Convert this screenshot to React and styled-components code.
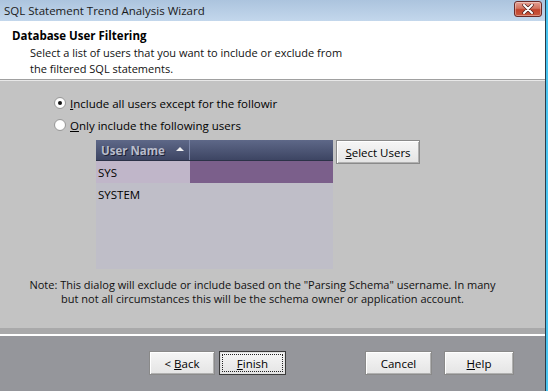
import styled, { createGlobalStyle } from 'styled-components';

const GlobalStyle = createGlobalStyle`
  html, body {
    margin: 0;
    padding: 0;
    background: #c3c3c3;
  }
  body {
    font-family: "Open Sans", "Noto Sans", sans-serif;
    font-size: 11px;
    color: #000;
  }
`;

const users = ['SYS', 'SYSTEM'];

const App = () => {
  return (
    <>
      <GlobalStyle />
      <Window>
        <Frame>
          <TitleBar>
            <TitleText>SQL Statement Trend Analysis Wizard</TitleText>
            <CloseButton>
              <svg width="14" height="10" viewBox="0 0 14 10">
                <path
                  d="M3 1 L11 9 M11 1 L3 9"
                  stroke="#4a2020"
                  strokeWidth="3.4"
                  strokeLinecap="round"
                  fill="none"
                />
                <path
                  d="M3 1 L11 9 M11 1 L3 9"
                  stroke="#fff"
                  strokeWidth="2"
                  strokeLinecap="round"
                  fill="none"
                />
              </svg>
            </CloseButton>
          </TitleBar>

          <Header>
            <HeaderTitle>Database User Filtering</HeaderTitle>
            <HeaderText>
              Select a list of users that you want to include or exclude from
              <br />
              the filtered SQL statements.
            </HeaderText>
          </Header>

          <Body>
            <Options>
              <Option>
                <Radio checked />
                <OptionLabel>
                  <u>I</u>nclude all users except for the followir
                </OptionLabel>
              </Option>
              <Option>
                <Radio />
                <OptionLabel>
                  <u>O</u>nly include the following users
                </OptionLabel>
              </Option>
            </Options>

            <ListRow>
              <List>
                <ListHeader>
                  <HeaderCell>
                    User Name
                    <SortArrow />
                  </HeaderCell>
                  <HeaderCell />
                </ListHeader>
                {users.map((u, i) => (
                  <ListItem key={u}>
                    <NameCell selected={i === 0}>{u}</NameCell>
                    <FillCell selected={i === 0} />
                  </ListItem>
                ))}
              </List>
              <PushButton width={84}>
                <u>S</u>elect Users
              </PushButton>
            </ListRow>

            <Note>
              Note: This dialog will exclude or include based on the "Parsing
              Schema" username. In many
              <br />
              but not all circumstances this will be the schema owner or
              application account.
            </Note>
          </Body>

          <Footer>
            <ButtonGroup>
              <PushButton width={66}>
                &lt;&nbsp;<u>B</u>ack
              </PushButton>
              <PushButton width={67} isDefault>
                <Focus>
                  <u>F</u>inish
                </Focus>
              </PushButton>
            </ButtonGroup>
            <ButtonGroup gap={12}>
              <PushButton width={67}>Cancel</PushButton>
              <PushButton width={70}>
                <u>H</u>elp
              </PushButton>
            </ButtonGroup>
          </Footer>
        </Frame>
      </Window>
    </>
  );
};

const Window = styled.div`
  width: 548px;
  height: 391px;
  box-sizing: border-box;
  border-right: 2px solid #49c4ef;
  display: flex;
  overflow: hidden;
`;

const Frame = styled.div`
  flex: 1;
  display: flex;
  flex-direction: column;
  border-right: 1px solid #2a3a48;
  min-width: 0;
`;

const TitleBar = styled.div`
  height: 21px;
  flex: none;
  display: flex;
  align-items: center;
  justify-content: space-between;
  padding: 0 3px 0 4px;
  background: linear-gradient(#acc4de, #c3d7ec);
`;

const TitleText = styled.span`
  font-size: 11.5px;
  color: #1a1a1a;
  white-space: nowrap;
`;

const CloseButton = styled.div`
  width: 28px;
  height: 16px;
  margin-top: -3px;
  box-sizing: border-box;
  border: 1px solid #6a2a28;
  border-radius: 3px;
  background: linear-gradient(#e5a093 0%, #d2735f 45%, #c2432c 55%, #c9593f 100%);
  display: flex;
  align-items: center;
  justify-content: center;
  box-shadow: inset 0 0 0 1px rgba(255, 255, 255, 0.35);
`;

const Header = styled.div`
  height: 59px;
  flex: none;
  background: #fff;
  padding: 8px 0 0 12px;
  box-sizing: border-box;
  border-bottom: 1px solid #a0a0a0;
  box-shadow: 0 1px 0 #e8e8e8;
`;

const HeaderTitle = styled.div`
  font-weight: 700;
  font-size: 11.5px;
  line-height: 14px;
`;

const HeaderText = styled.div`
  margin-left: 18px;
  margin-top: 2px;
  line-height: 16px;
  color: #111;
`;

const Body = styled.div`
  flex: 1;
  background: #c3c3c3;
  margin-top: 1px;
  padding: 15px 0 0 54px;
  display: flex;
  flex-direction: column;
`;

const Options = styled.div`
  display: flex;
  flex-direction: column;
  gap: 8px;
`;

const Option = styled.div`
  display: flex;
  align-items: center;
  gap: 4px;
  height: 14px;
`;

const Radio = styled.span`
  width: 12px;
  height: 12px;
  box-sizing: border-box;
  border-radius: 50%;
  border: 1px solid #9a9a9a;
  background: radial-gradient(circle, #ffffff 0 55%, #e6e6e6 100%);
  position: relative;
  flex: none;
  &::after {
    content: '';
    display: ${props => (props.checked ? 'block' : 'none')};
    position: absolute;
    left: 3px;
    top: 3px;
    width: 4px;
    height: 4px;
    border-radius: 50%;
    background: #111;
  }
`;

const OptionLabel = styled.span`
  white-space: nowrap;
  font-size: 11.5px;
`;

const ListRow = styled.div`
  display: flex;
  align-items: flex-start;
  gap: 3px;
  margin: 8px 0 0 42px;
`;

const List = styled.div`
  width: 237px;
  height: 129px;
  background: #bfbec8;
  display: flex;
  flex-direction: column;
`;

const ListHeader = styled.div`
  height: 21px;
  display: grid;
  grid-template-columns: 94px 1fr;
  background: linear-gradient(#5e6888, #3d4563);
  border-bottom: 1px solid #2c3248;
  box-sizing: border-box;
`;

const HeaderCell = styled.div`
  display: flex;
  align-items: center;
  justify-content: space-between;
  padding: 0 5px 0 5px;
  color: #b9bccb;
  font-weight: 700;
  font-size: 11.5px;
  text-shadow: 1px 1px 0 #1e2235;
  border-right: 1px solid #7b86a8;
  &:last-child {
    border-right: none;
  }
`;

const SortArrow = styled.span`
  width: 0;
  height: 0;
  border-left: 4px solid transparent;
  border-right: 4px solid transparent;
  border-bottom: 4px solid #f0f0f0;
  margin-bottom: 2px;
`;

const ListItem = styled.div`
  height: 22px;
  display: grid;
  grid-template-columns: 94px 1fr;
`;

const NameCell = styled.div`
  display: flex;
  align-items: center;
  padding-left: 2px;
  font-size: 11.5px;
  background: ${props => (props.selected ? '#c0b6c9' : 'transparent')};
`;

const FillCell = styled.div`
  background: ${props => (props.selected ? '#7b5f8b' : 'transparent')};
`;

const PushButton = styled.div`
  width: ${props => props.width}px;
  height: 24px;
  flex: none;
  box-sizing: border-box;
  display: flex;
  align-items: center;
  justify-content: center;
  font-size: 11.5px;
  white-space: nowrap;
  background: linear-gradient(#f6f6f6, #e4e4e4);
  border: 1px solid ${props => (props.isDefault ? '#3a3a3a' : '#8a8a8a')};
  box-shadow: ${props =>
    props.isDefault
      ? 'inset 0 0 0 1px #e0e0e0'
      : 'inset 1px 1px 0 #fff, inset -1px -1px 0 #b0b0b0'};
  padding: 2px;
`;

const Focus = styled.span`
  flex: 1;
  align-self: stretch;
  display: flex;
  align-items: center;
  justify-content: center;
  border: 1px dotted #222;
`;

const Note = styled.div`
  margin: 9px 0 0 -54px;
  padding-right: 20px;
  text-align: center;
  line-height: 14px;
  font-size: 11px;
  color: #111;
`;

const Footer = styled.div`
  height: 63px;
  flex: none;
  box-sizing: border-box;
  border-top: 6px solid #a9a9aa;
  background: #95969b;
  box-shadow: inset 0 1px 0 #ffffff, inset 0 2px 0 #ffffff;
  display: flex;
  align-items: flex-start;
  padding: 17px 0 0 149px;
  gap: 79px;
`;

const ButtonGroup = styled.div`
  display: flex;
  gap: ${props => props.gap || 4}px;
`;

export default App;
